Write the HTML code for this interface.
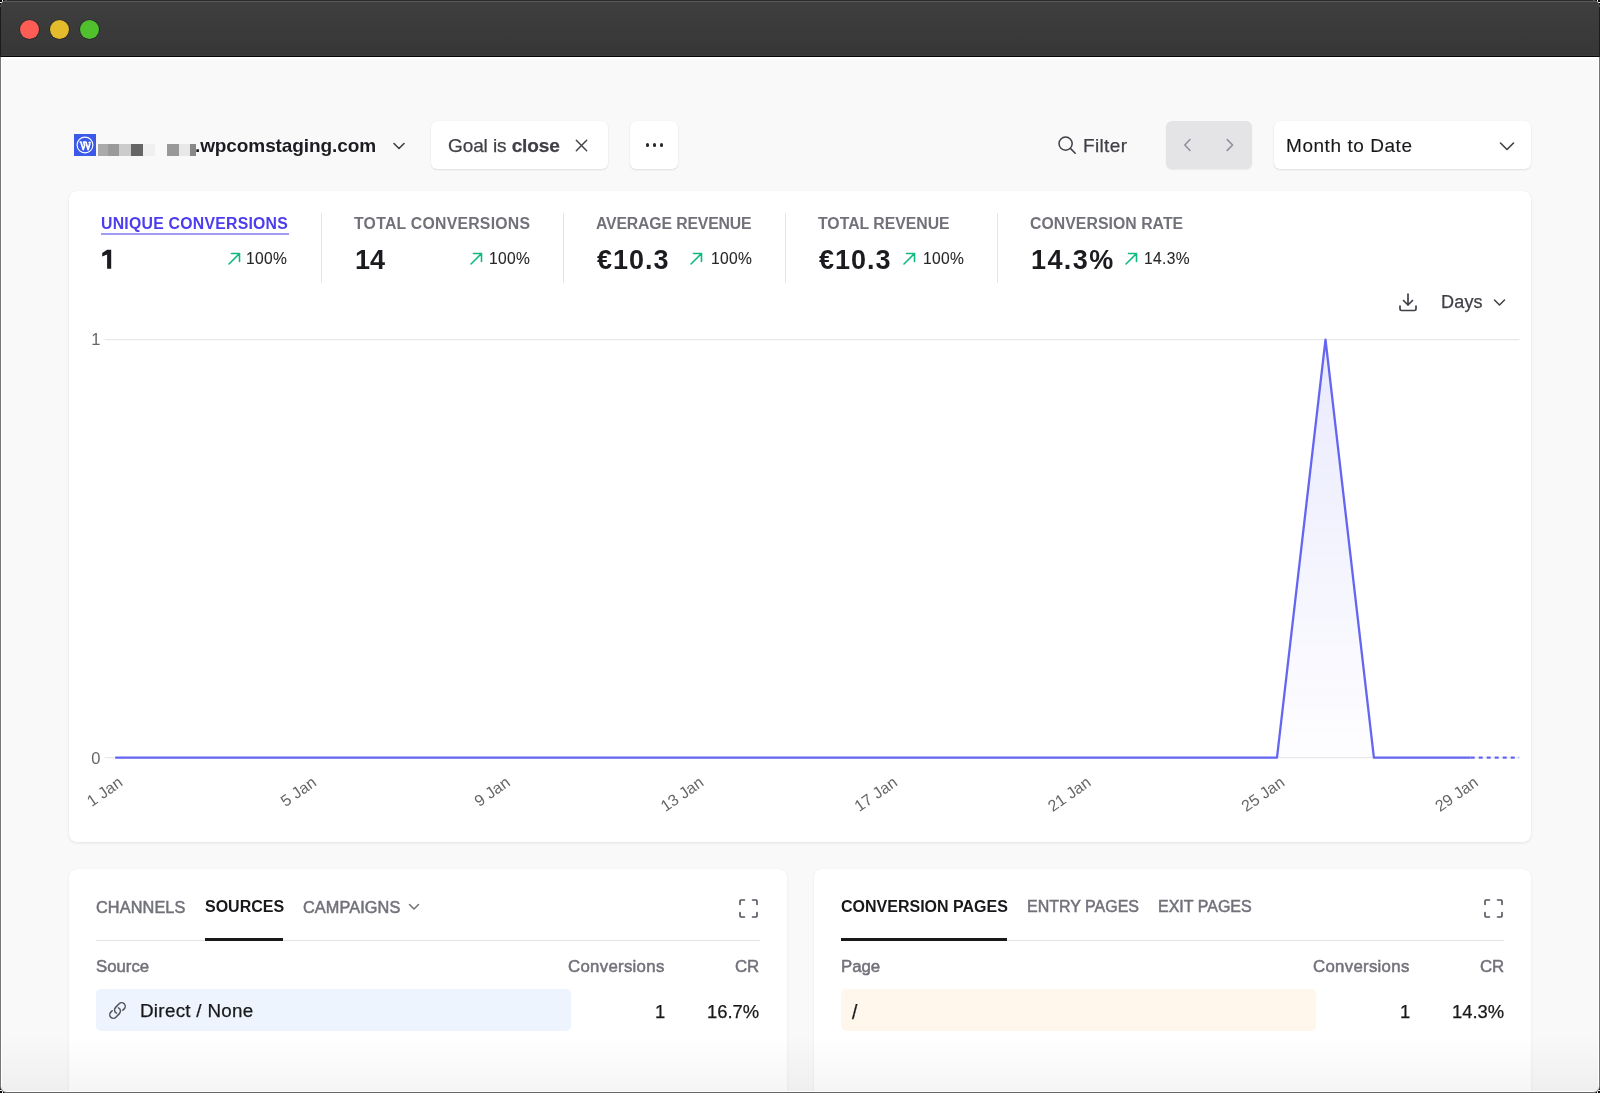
<!DOCTYPE html>
<html><head><meta charset="utf-8"><title>Dashboard</title>
<style>
html,body{margin:0;padding:0;}
body{width:1600px;height:1093px;position:relative;overflow:hidden;background:#f9f9f9;font-family:"Liberation Sans",sans-serif;}
.t{position:absolute;white-space:nowrap;line-height:1;will-change:transform;}
b{font-weight:700;}
</style></head><body>
<div style="position:absolute;left:0px;top:0px;width:1600px;height:1093px;background:#f9f9f9;"></div>
<div style="position:absolute;left:0px;top:0px;width:1600px;height:57px;background:linear-gradient(#3f3f3f,#363636);"></div>
<div style="position:absolute;left:0px;top:0px;width:1600px;height:1px;background:#2b2b2b;"></div>
<div style="position:absolute;left:0px;top:1px;width:1600px;height:1px;background:#5a5a5a;"></div>
<div style="position:absolute;left:0px;top:55px;width:1600px;height:1px;background:#3c3c3c;"></div>
<div style="position:absolute;left:0px;top:56px;width:1600px;height:1px;background:#080808;"></div>
<div style="position:absolute;left:0px;top:0px;width:1px;height:57px;background:#1c1c1c;"></div>
<div style="position:absolute;left:1599px;top:0px;width:1px;height:57px;background:#1c1c1c;"></div>
<div style="position:absolute;left:0px;top:57px;width:1600px;height:2px;background:#ffffff;"></div>
<div style="position:absolute;left:19.5px;top:19.5px;width:19.0px;height:19.0px;border-radius:50%;background:#fe5d55;box-shadow:0 0 0 0.6px rgba(20,20,30,.6);"></div>
<div style="position:absolute;left:49.5px;top:19.5px;width:19.0px;height:19.0px;border-radius:50%;background:#e4bb2b;box-shadow:0 0 0 0.6px rgba(20,20,30,.6);"></div>
<div style="position:absolute;left:79.5px;top:19.5px;width:19.0px;height:19.0px;border-radius:50%;background:#50c02d;box-shadow:0 0 0 0.6px rgba(20,20,30,.6);"></div>
<svg style="position:absolute;left:74px;top:134px" width="22" height="22" viewBox="0 0 22 22">
<rect width="22" height="22" fill="#3b5ae8"/>
<circle cx="11" cy="11" r="7.9" fill="none" stroke="#fff" stroke-width="1.1"/>
<path d="M5.6 8.0 L6.9 8.0 L9.2 15.6 L10.6 11.4 L9.6 8.0 L11.9 8.0 L14.1 15.6 L15.9 9.6" fill="none" stroke="#fff" stroke-width="1.7" stroke-linejoin="round"/>
<circle cx="15.7" cy="8.6" r="1.2" fill="#fff"/>
</svg>
<div style="position:absolute;left:98px;top:144px;width:10px;height:12px;background:#aaaaaa;"></div>
<div style="position:absolute;left:108px;top:144px;width:11px;height:12px;background:#9a9a9a;"></div>
<div style="position:absolute;left:119px;top:144px;width:12px;height:12px;background:#cccccc;"></div>
<div style="position:absolute;left:131px;top:144px;width:12px;height:12px;background:#666666;"></div>
<div style="position:absolute;left:143px;top:144px;width:12px;height:12px;background:#f0f0f0;"></div>
<div style="position:absolute;left:167px;top:144px;width:12px;height:12px;background:#999999;"></div>
<div style="position:absolute;left:179px;top:144px;width:11px;height:12px;background:#e8e8e8;"></div>
<div style="position:absolute;left:190px;top:144px;width:6px;height:12px;background:#888888;"></div>
<div class="t" style="left:195.00px;top:136.21px;font-size:19px;font-weight:700;color:#1c1c22;letter-spacing:-0.1px;">.wpcomstaging.com</div>
<svg style="position:absolute;left:392px;top:141px" width="14" height="10" viewBox="0 0 14 10"><path d="M2 2.5 L7 7.5 L12 2.5" fill="none" stroke="#3f3f46" stroke-width="1.6" stroke-linecap="round" stroke-linejoin="round"/></svg>
<div style="position:absolute;left:431px;top:121px;width:177px;height:48px;background:#fff;border-radius:6px;box-shadow:0 1px 2px rgba(0,0,0,.10),0 0 1px rgba(0,0,0,.08);"></div>
<div class="t" style="left:447.50px;top:135.91px;font-size:19px;font-weight:400;color:#3f3f46;letter-spacing:-0.1px;-webkit-text-stroke:0.25px #3f3f46;">Goal is <b>close</b></div>
<svg style="position:absolute;left:574px;top:138px" width="15" height="15" viewBox="0 0 15 15"><path d="M2.3 2.3 L12.7 12.7 M12.7 2.3 L2.3 12.7" stroke="#3f3f46" stroke-width="1.4" stroke-linecap="round"/></svg>
<div style="position:absolute;left:630px;top:121px;width:48px;height:48px;background:#fff;border-radius:6px;box-shadow:0 1px 2px rgba(0,0,0,.10),0 0 1px rgba(0,0,0,.08);"></div>
<div style="position:absolute;left:645.9px;top:143.4px;width:3.2000000000000455px;height:3.1999999999999886px;background:#27272a;border-radius:50%;"></div>
<div style="position:absolute;left:652.9px;top:143.4px;width:3.2000000000000455px;height:3.1999999999999886px;background:#27272a;border-radius:50%;"></div>
<div style="position:absolute;left:659.9px;top:143.4px;width:3.2000000000000455px;height:3.1999999999999886px;background:#27272a;border-radius:50%;"></div>
<svg style="position:absolute;left:1056px;top:134px" width="22" height="22" viewBox="0 0 22 22"><circle cx="9.6" cy="9.6" r="6.6" fill="none" stroke="#3f3f46" stroke-width="1.5"/><path d="M14.4 14.4 L19.2 19.2" stroke="#3f3f46" stroke-width="1.5" stroke-linecap="round"/></svg>
<div class="t" style="left:1083.00px;top:136.41px;font-size:19px;font-weight:400;color:#3f3f46;letter-spacing:0.35px;-webkit-text-stroke:0.25px #3f3f46;">Filter</div>
<div style="position:absolute;left:1166px;top:121px;width:86px;height:48px;background:#e4e4e7;border-radius:6px;box-shadow:0 1px 2px rgba(0,0,0,.06);"></div>
<svg style="position:absolute;left:1180px;top:137px" width="14" height="16" viewBox="0 0 14 16"><path d="M10 2.6 L4.8 8 L10 13.4" fill="none" stroke="#8e8e9a" stroke-width="1.5" stroke-linecap="round" stroke-linejoin="round"/></svg>
<svg style="position:absolute;left:1223px;top:137px" width="14" height="16" viewBox="0 0 14 16"><path d="M4.2 2.6 L9.6 8 L4.2 13.4" fill="none" stroke="#8e8e9a" stroke-width="1.5" stroke-linecap="round" stroke-linejoin="round"/></svg>
<div style="position:absolute;left:1274px;top:121px;width:257px;height:48px;background:#fff;border-radius:6px;box-shadow:0 1px 2px rgba(0,0,0,.10),0 0 1px rgba(0,0,0,.08);"></div>
<div class="t" style="left:1285.50px;top:136.11px;font-size:19px;font-weight:400;color:#18181b;letter-spacing:0.55px;-webkit-text-stroke:0.12px #18181b;">Month to Date</div>
<svg style="position:absolute;left:1498px;top:140px" width="18" height="13" viewBox="0 0 18 13"><path d="M2.5 3 L9 9.5 L15.5 3" fill="none" stroke="#3f3f46" stroke-width="1.6" stroke-linecap="round" stroke-linejoin="round"/></svg>
<div style="position:absolute;left:69px;top:191px;width:1462px;height:651px;background:#fff;border-radius:8px;box-shadow:0 1px 3px rgba(0,0,0,.09),0 0 1px rgba(0,0,0,.06);"></div>
<div class="t" style="left:100.90px;top:215.82px;font-size:15.8px;font-weight:700;color:#4c3cf0;letter-spacing:0.25px;">UNIQUE CONVERSIONS</div>
<div class="t" style="left:354.20px;top:215.82px;font-size:15.8px;font-weight:700;color:#71717a;letter-spacing:0.25px;">TOTAL CONVERSIONS</div>
<div class="t" style="left:596.30px;top:215.82px;font-size:15.8px;font-weight:700;color:#71717a;letter-spacing:-0.15px;">AVERAGE REVENUE</div>
<div class="t" style="left:818.30px;top:215.82px;font-size:15.8px;font-weight:700;color:#71717a;letter-spacing:0.0px;">TOTAL REVENUE</div>
<div class="t" style="left:1030.30px;top:215.82px;font-size:15.8px;font-weight:700;color:#71717a;letter-spacing:0.05px;">CONVERSION RATE</div>
<div style="position:absolute;left:101px;top:233px;width:188px;height:2px;background:#a09cf6;"></div>
<div style="position:absolute;left:321.0px;top:213px;width:1.0px;height:70px;background:#e4e4e7;"></div>
<div style="position:absolute;left:563.0px;top:213px;width:1.0px;height:70px;background:#e4e4e7;"></div>
<div style="position:absolute;left:784.5px;top:213px;width:1.0px;height:70px;background:#e4e4e7;"></div>
<div style="position:absolute;left:996.5px;top:213px;width:1.0px;height:70px;background:#e4e4e7;"></div>
<div class="t" style="left:354.70px;top:246.84px;font-size:27px;font-weight:700;color:#1c1c20;letter-spacing:0px;">14</div>
<div class="t" style="left:597.00px;top:246.84px;font-size:27px;font-weight:700;color:#1c1c20;letter-spacing:1.0px;">€10.3</div>
<div class="t" style="left:819.00px;top:246.84px;font-size:27px;font-weight:700;color:#1c1c20;letter-spacing:1.0px;">€10.3</div>
<div class="t" style="left:1030.80px;top:246.84px;font-size:27px;font-weight:700;color:#1c1c20;letter-spacing:1.4px;">14.3%</div>
<svg style="position:absolute;left:0;top:0" width="200" height="300" viewBox="0 0 200 300"><path d="M107.1 249.8 L111.2 249.8 L111.2 268.7 L107.1 268.7 L107.1 254.6 L102.2 256.6 L102.2 253.0 Z" fill="#1c1c20"/></svg>
<svg style="position:absolute;left:226.8px;top:251px" width="15" height="15" viewBox="0 0 15 15"><path d="M2 13 L12.5 2.5 M4.5 2.5 L12.5 2.5 L12.5 10.5" fill="none" stroke="#10b981" stroke-width="1.6" stroke-linecap="round" stroke-linejoin="round"/></svg>
<div class="t" style="right:1312.50px;top:250.99px;font-size:15.6px;font-weight:400;color:#27272a;letter-spacing:0.35px;-webkit-text-stroke:0.1px #27272a;">100%</div>
<svg style="position:absolute;left:469px;top:251px" width="15" height="15" viewBox="0 0 15 15"><path d="M2 13 L12.5 2.5 M4.5 2.5 L12.5 2.5 L12.5 10.5" fill="none" stroke="#10b981" stroke-width="1.6" stroke-linecap="round" stroke-linejoin="round"/></svg>
<div class="t" style="right:1069.80px;top:250.99px;font-size:15.6px;font-weight:400;color:#27272a;letter-spacing:0.35px;-webkit-text-stroke:0.1px #27272a;">100%</div>
<svg style="position:absolute;left:689px;top:251px" width="15" height="15" viewBox="0 0 15 15"><path d="M2 13 L12.5 2.5 M4.5 2.5 L12.5 2.5 L12.5 10.5" fill="none" stroke="#10b981" stroke-width="1.6" stroke-linecap="round" stroke-linejoin="round"/></svg>
<div class="t" style="right:848.00px;top:250.99px;font-size:15.6px;font-weight:400;color:#27272a;letter-spacing:0.35px;-webkit-text-stroke:0.1px #27272a;">100%</div>
<svg style="position:absolute;left:902px;top:251px" width="15" height="15" viewBox="0 0 15 15"><path d="M2 13 L12.5 2.5 M4.5 2.5 L12.5 2.5 L12.5 10.5" fill="none" stroke="#10b981" stroke-width="1.6" stroke-linecap="round" stroke-linejoin="round"/></svg>
<div class="t" style="right:636.00px;top:250.99px;font-size:15.6px;font-weight:400;color:#27272a;letter-spacing:0.35px;-webkit-text-stroke:0.1px #27272a;">100%</div>
<svg style="position:absolute;left:1124px;top:251px" width="15" height="15" viewBox="0 0 15 15"><path d="M2 13 L12.5 2.5 M4.5 2.5 L12.5 2.5 L12.5 10.5" fill="none" stroke="#10b981" stroke-width="1.6" stroke-linecap="round" stroke-linejoin="round"/></svg>
<div class="t" style="right:410.00px;top:250.99px;font-size:15.6px;font-weight:400;color:#27272a;letter-spacing:0.35px;-webkit-text-stroke:0.1px #27272a;">14.3%</div>
<svg style="position:absolute;left:1397.3px;top:290.8px" width="22" height="22" viewBox="0 0 22 22"><path d="M11 3 L11 14 M6.5 9.5 L11 14 L15.5 9.5" fill="none" stroke="#3f3f46" stroke-width="1.7" stroke-linecap="round" stroke-linejoin="round"/><path d="M3 15 L3 18 Q3 19.5 4.5 19.5 L17.5 19.5 Q19 19.5 19 18 L19 15" fill="none" stroke="#3f3f46" stroke-width="1.7" stroke-linecap="round" stroke-linejoin="round"/></svg>
<div class="t" style="left:1440.50px;top:293.26px;font-size:18px;font-weight:400;color:#3f3f46;letter-spacing:0.2px;-webkit-text-stroke:0.25px #3f3f46;">Days</div>
<svg style="position:absolute;left:1492px;top:297px" width="15" height="11" viewBox="0 0 15 11"><path d="M2.5 3 L7.5 8 L12.5 3" fill="none" stroke="#3f3f46" stroke-width="1.5" stroke-linecap="round" stroke-linejoin="round"/></svg>
<svg style="position:absolute;left:0;top:0;will-change:transform" width="1600" height="1093" viewBox="0 0 1600 1093"><defs><linearGradient id="ag" x1="0" y1="0" x2="0" y2="1"><stop offset="0" stop-color="#6366f1" stop-opacity="0.14"/><stop offset="1" stop-color="#6366f1" stop-opacity="0.01"/></linearGradient></defs><line x1="104.7" y1="339.6" x2="1519.5" y2="339.6" stroke="#e9e9ec" stroke-width="1.4"/><line x1="104.7" y1="757.6" x2="1519.5" y2="757.6" stroke="#e9e9ec" stroke-width="1.4"/><path d="M1277.0 757.6 L1325.5 339.6 L1373.9 757.6 Z" fill="url(#ag)"/><path d="M115.2 757.6 L163.6 757.6 L212.0 757.6 L260.4 757.6 L308.8 757.6 L357.3 757.6 L405.7 757.6 L454.1 757.6 L502.5 757.6 L550.9 757.6 L599.3 757.6 L647.7 757.6 L696.1 757.6 L744.5 757.6 L792.9 757.6 L841.4 757.6 L889.8 757.6 L938.2 757.6 L986.6 757.6 L1035.0 757.6 L1083.4 757.6 L1131.8 757.6 L1180.2 757.6 L1228.6 757.6 L1277.0 757.6 L1325.5 339.6 L1373.9 757.6 L1422.3 757.6 L1470.7 757.6" fill="none" stroke="#6466f1" stroke-width="2.3" stroke-linejoin="round" stroke-linecap="butt"/><line x1="1470.7" y1="757.6" x2="1519.1" y2="757.6" stroke="#6466f1" stroke-width="2.1" stroke-dasharray="4 4"/><text x="100.5" y="345" font-size="16.5" fill="#666" text-anchor="end" font-family="Liberation Sans">1</text><text x="100.5" y="763.5" font-size="16.5" fill="#666" text-anchor="end" font-family="Liberation Sans">0</text><text transform="translate(123.9 784.7) rotate(-35)" font-size="16" fill="#666" text-anchor="end" font-family="Liberation Sans">1 Jan</text><text transform="translate(317.5 784.7) rotate(-35)" font-size="16" fill="#666" text-anchor="end" font-family="Liberation Sans">5 Jan</text><text transform="translate(511.2 784.7) rotate(-35)" font-size="16" fill="#666" text-anchor="end" font-family="Liberation Sans">9 Jan</text><text transform="translate(704.8 784.7) rotate(-35)" font-size="16" fill="#666" text-anchor="end" font-family="Liberation Sans">13 Jan</text><text transform="translate(898.5 784.7) rotate(-35)" font-size="16" fill="#666" text-anchor="end" font-family="Liberation Sans">17 Jan</text><text transform="translate(1092.1 784.7) rotate(-35)" font-size="16" fill="#666" text-anchor="end" font-family="Liberation Sans">21 Jan</text><text transform="translate(1285.7 784.7) rotate(-35)" font-size="16" fill="#666" text-anchor="end" font-family="Liberation Sans">25 Jan</text><text transform="translate(1479.4 784.7) rotate(-35)" font-size="16" fill="#666" text-anchor="end" font-family="Liberation Sans">29 Jan</text></svg>
<div style="position:absolute;left:69px;top:869px;width:718px;height:241px;background:#fff;border-radius:8px;box-shadow:0 1px 3px rgba(0,0,0,.07),0 0 1px rgba(0,0,0,.06);"></div>
<div style="position:absolute;left:813.5px;top:869px;width:717.5px;height:241px;background:#fff;border-radius:8px;box-shadow:0 1px 3px rgba(0,0,0,.07),0 0 1px rgba(0,0,0,.06);"></div>
<div class="t" style="left:95.60px;top:898.50px;font-size:16.3px;font-weight:400;color:#71717a;letter-spacing:0.1px;-webkit-text-stroke:0.5px #71717a;">CHANNELS</div>
<div class="t" style="left:204.90px;top:898.75px;font-size:16px;font-weight:700;color:#18181b;letter-spacing:0px;">SOURCES</div>
<div class="t" style="left:302.80px;top:898.50px;font-size:16.3px;font-weight:400;color:#71717a;letter-spacing:0.1px;-webkit-text-stroke:0.5px #71717a;">CAMPAIGNS</div>
<svg style="position:absolute;left:407px;top:901px" width="14" height="12" viewBox="0 0 14 12"><path d="M2.5 3.5 L7 8 L11.5 3.5" fill="none" stroke="#71717a" stroke-width="1.5" stroke-linecap="round" stroke-linejoin="round"/></svg>
<div style="position:absolute;left:95.6px;top:939.5px;width:664.4px;height:1.2999999999999545px;background:#e4e4e7;"></div>
<div style="position:absolute;left:205px;top:938px;width:78px;height:3px;background:#18181b;"></div>
<svg style="position:absolute;left:738px;top:898px" width="21" height="21" viewBox="0 0 21 21"><path d="M2 6.5 L2 3 Q2 2 3 2 L6.5 2 M14.5 2 L18 2 Q19 2 19 3 L19 6.5 M19 14.5 L19 18 Q19 19 18 19 L14.5 19 M6.5 19 L3 19 Q2 19 2 18 L2 14.5" fill="none" stroke="#52525b" stroke-width="1.6" stroke-linecap="round"/></svg>
<div class="t" style="left:95.60px;top:958.58px;font-size:16.8px;font-weight:400;color:#71717a;letter-spacing:0px;-webkit-text-stroke:0.5px #71717a;">Source</div>
<div class="t" style="right:935.00px;top:958.58px;font-size:16.8px;font-weight:400;color:#71717a;letter-spacing:0.3px;-webkit-text-stroke:0.5px #71717a;">Conversions</div>
<div class="t" style="right:841.20px;top:958.58px;font-size:16.8px;font-weight:400;color:#71717a;letter-spacing:0px;-webkit-text-stroke:0.5px #71717a;">CR</div>
<div style="position:absolute;left:95.6px;top:988.7px;width:475.4px;height:42.799999999999955px;background:#edf4fe;border-radius:5px;"></div>
<svg style="position:absolute;left:107.5px;top:1000.8px" width="19" height="19" viewBox="0 0 24 24"><path d="M13.19 8.688a4.5 4.5 0 0 1 1.242 7.244l-4.5 4.5a4.5 4.5 0 0 1-6.364-6.364l1.757-1.757m13.35-.622 1.757-1.757a4.5 4.5 0 0 0-6.364-6.364l-4.5 4.5a4.5 4.5 0 0 0 1.242 7.244" fill="none" stroke="#52525b" stroke-width="1.9" stroke-linecap="round" stroke-linejoin="round"/></svg>
<div class="t" style="left:139.50px;top:1001.78px;font-size:18.8px;font-weight:400;color:#18181b;letter-spacing:0.3px;-webkit-text-stroke:0.25px #18181b;">Direct / None</div>
<div class="t" style="right:935.00px;top:1002.82px;font-size:18.4px;font-weight:400;color:#18181b;letter-spacing:0px;-webkit-text-stroke:0.25px #18181b;">1</div>
<div class="t" style="right:841.20px;top:1002.82px;font-size:18.4px;font-weight:400;color:#18181b;letter-spacing:0px;-webkit-text-stroke:0.25px #18181b;">16.7%</div>
<div class="t" style="left:840.80px;top:899.05px;font-size:16px;font-weight:700;color:#18181b;letter-spacing:0px;">CONVERSION PAGES</div>
<div class="t" style="left:1027.00px;top:899.05px;font-size:16px;font-weight:400;color:#71717a;letter-spacing:0px;-webkit-text-stroke:0.5px #71717a;">ENTRY PAGES</div>
<div class="t" style="left:1158.00px;top:899.05px;font-size:16px;font-weight:400;color:#71717a;letter-spacing:0px;-webkit-text-stroke:0.5px #71717a;">EXIT PAGES</div>
<div style="position:absolute;left:840.8px;top:939.5px;width:663.7px;height:1.2999999999999545px;background:#e4e4e7;"></div>
<div style="position:absolute;left:840.8px;top:938px;width:166.70000000000005px;height:3px;background:#18181b;"></div>
<svg style="position:absolute;left:1483px;top:898px" width="21" height="21" viewBox="0 0 21 21"><path d="M2 6.5 L2 3 Q2 2 3 2 L6.5 2 M14.5 2 L18 2 Q19 2 19 3 L19 6.5 M19 14.5 L19 18 Q19 19 18 19 L14.5 19 M6.5 19 L3 19 Q2 19 2 18 L2 14.5" fill="none" stroke="#52525b" stroke-width="1.6" stroke-linecap="round"/></svg>
<div class="t" style="left:840.80px;top:958.58px;font-size:16.8px;font-weight:400;color:#71717a;letter-spacing:0px;-webkit-text-stroke:0.5px #71717a;">Page</div>
<div class="t" style="right:190.00px;top:958.58px;font-size:16.8px;font-weight:400;color:#71717a;letter-spacing:0.3px;-webkit-text-stroke:0.5px #71717a;">Conversions</div>
<div class="t" style="right:95.80px;top:958.58px;font-size:16.8px;font-weight:400;color:#71717a;letter-spacing:0px;-webkit-text-stroke:0.5px #71717a;">CR</div>
<div style="position:absolute;left:840.8px;top:988.8px;width:475.20000000000005px;height:42.200000000000045px;background:#fff7ec;border-radius:5px;"></div>
<div class="t" style="left:851.50px;top:1003.07px;font-size:19.4px;font-weight:400;color:#18181b;letter-spacing:0px;-webkit-text-stroke:0.25px #18181b;">/</div>
<div class="t" style="right:190.00px;top:1002.82px;font-size:18.4px;font-weight:400;color:#18181b;letter-spacing:0px;-webkit-text-stroke:0.25px #18181b;">1</div>
<div class="t" style="right:95.80px;top:1002.82px;font-size:18.4px;font-weight:400;color:#18181b;letter-spacing:0px;-webkit-text-stroke:0.25px #18181b;">14.3%</div>
<div style="position:absolute;left:2px;top:1035px;width:1596px;height:56px;background:linear-gradient(rgba(0,0,0,0),rgba(0,0,0,0.04));"></div>
<div style="position:absolute;left:0px;top:57px;width:1px;height:1036px;background:#777;"></div>
<div style="position:absolute;left:1px;top:57px;width:1px;height:1035px;background:#fff;"></div>
<div style="position:absolute;left:1599px;top:57px;width:1px;height:1036px;background:#777;"></div>
<div style="position:absolute;left:1598px;top:57px;width:1px;height:1035px;background:#fff;"></div>
<div style="position:absolute;left:0px;top:1092px;width:1600px;height:1px;background:#666;"></div>
<div style="position:absolute;left:1px;top:1091px;width:1598px;height:1px;background:#fff;"></div>
<svg style="position:absolute;left:0px;top:0px;transform:scale(1,1);transform-origin:6px 6px" width="12" height="12" viewBox="0 0 12 12"><path d="M0 0 H7 A7 7 0 0 0 0 7 Z" fill="#000"/><path d="M7 0.5 A6.5 6.5 0 0 0 0.5 7" fill="none" stroke="#5a5a5a" stroke-width="1"/><rect x="0" y="2" width="1.8" height="1" fill="#fff"/><rect x="2" y="0" width="1" height="1.7" fill="#fff"/></svg>
<svg style="position:absolute;left:1588px;top:0px;transform:scale(-1,1);transform-origin:6px 6px" width="12" height="12" viewBox="0 0 12 12"><path d="M0 0 H7 A7 7 0 0 0 0 7 Z" fill="#000"/><path d="M7 0.5 A6.5 6.5 0 0 0 0.5 7" fill="none" stroke="#5a5a5a" stroke-width="1"/><rect x="0" y="2" width="1.8" height="1" fill="#fff"/><rect x="2" y="0" width="1" height="1.7" fill="#fff"/></svg>
<svg style="position:absolute;left:0px;top:1081px;transform:scale(1,-1);transform-origin:6px 6px" width="12" height="12" viewBox="0 0 12 12"><path d="M0 0 H7 A7 7 0 0 0 0 7 Z" fill="#000"/><path d="M7 0.5 A6.5 6.5 0 0 0 0.5 7" fill="none" stroke="#777" stroke-width="1"/><rect x="0" y="2" width="1.8" height="1" fill="#fff"/><rect x="2" y="0" width="1" height="1.7" fill="#fff"/></svg>
<svg style="position:absolute;left:1588px;top:1081px;transform:scale(-1,-1);transform-origin:6px 6px" width="12" height="12" viewBox="0 0 12 12"><path d="M0 0 H7 A7 7 0 0 0 0 7 Z" fill="#000"/><path d="M7 0.5 A6.5 6.5 0 0 0 0.5 7" fill="none" stroke="#777" stroke-width="1"/><rect x="0" y="2" width="1.8" height="1" fill="#fff"/><rect x="2" y="0" width="1" height="1.7" fill="#fff"/></svg>
</body></html>
